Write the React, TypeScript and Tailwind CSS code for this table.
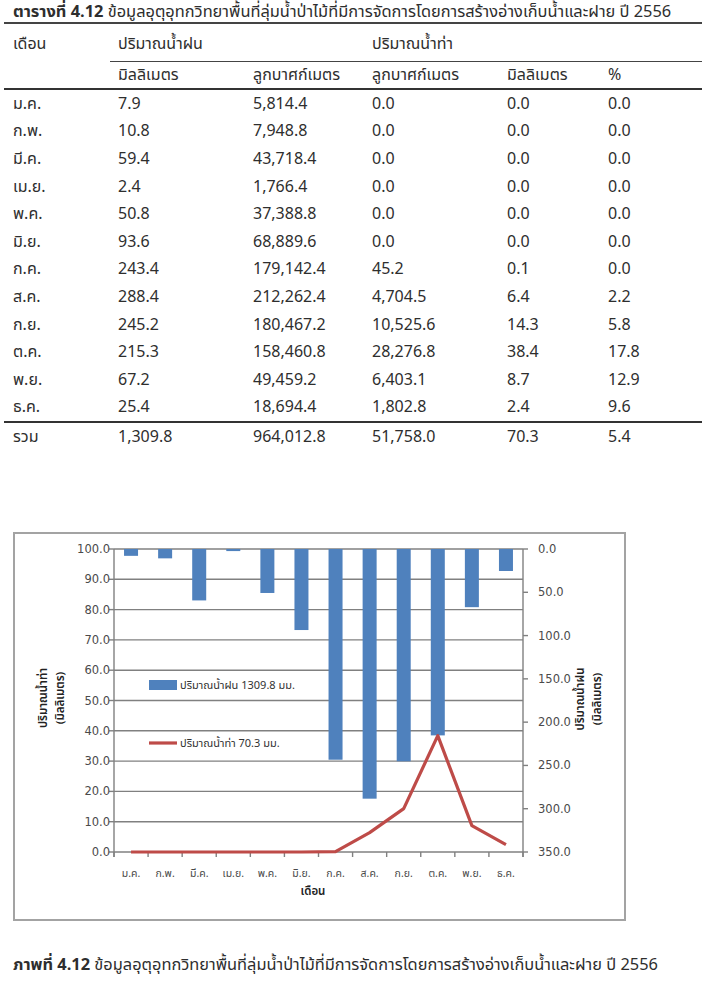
const months = ["ม.ค.", "ก.พ.", "มี.ค.", "เม.ย.", "พ.ค.", "มิ.ย.", "ก.ค.", "ส.ค.", "ก.ย.", "ต.ค.", "พ.ย.", "ธ.ค."];

const rows = [
  ["7.9", "5,814.4", "0.0", "0.0", "0.0"],
  ["10.8", "7,948.8", "0.0", "0.0", "0.0"],
  ["59.4", "43,718.4", "0.0", "0.0", "0.0"],
  ["2.4", "1,766.4", "0.0", "0.0", "0.0"],
  ["50.8", "37,388.8", "0.0", "0.0", "0.0"],
  ["93.6", "68,889.6", "0.0", "0.0", "0.0"],
  ["243.4", "179,142.4", "45.2", "0.1", "0.0"],
  ["288.4", "212,262.4", "4,704.5", "6.4", "2.2"],
  ["245.2", "180,467.2", "10,525.6", "14.3", "5.8"],
  ["215.3", "158,460.8", "28,276.8", "38.4", "17.8"],
  ["67.2", "49,459.2", "6,403.1", "8.7", "12.9"],
  ["25.4", "18,694.4", "1,802.8", "2.4", "9.6"],
];

const rain = [7.9, 10.8, 59.4, 2.4, 50.8, 93.6, 243.4, 288.4, 245.2, 215.3, 67.2, 25.4];
const runoff = [0, 0, 0, 0, 0, 0, 0.1, 6.4, 14.3, 38.4, 8.7, 2.4];

const cols = "grid grid-cols-[106px_135px_119px_135px_101px_1fr]";
const cell = "pl-[8px]";
const num = "'DejaVu Sans', sans-serif";

const Row = ({ label, values }: { label: string; values: string[] }) => (
  <div className={`${cols} h-[27.6px] items-center`}>
    <div className="pl-[9px]">{label}</div>
    {values.map((v, i) => (
      <div key={i} className={cell}>
        {v}
      </div>
    ))}
  </div>
);

// plot area inside the svg
const L = 99;
const R = 508;
const T = 15;
const B = 318;
const H = B - T;
const cw = (R - L) / 12;

const Chart = () => {
  const linePts = runoff
    .map((v, i) => `${L + cw * i + cw / 2},${B - (v / 100) * H}`)
    .join(" ");
  return (
    <svg width="609" height="385" className="block">
      {/* gridlines */}
      {Array.from({ length: 11 }).map((_, i) => {
        const y = B - (i * H) / 10;
        return (
          <g key={i}>
            <line x1={L} x2={R} y1={y} y2={y} stroke="#808080" strokeWidth="1.4" />
            <line x1={L - 5} x2={L} y1={y} y2={y} stroke="#808080" strokeWidth="1.4" />
            <text x={L - 4} y={y + 4} fontSize="11.5" fontFamily={num} textAnchor="end" fill="#4a4a4a">
              {(i * 10).toFixed(1)}
            </text>
          </g>
        );
      })}
      {/* right axis */}
      {Array.from({ length: 8 }).map((_, i) => {
        const y = T + (i * H) / 7;
        return (
          <g key={i}>
            <line x1={R} x2={R + 5} y1={y} y2={y} stroke="#808080" strokeWidth="1.4" />
            <text x={R + 15} y={y + 4} fontSize="11.5" fontFamily={num} fill="#4a4a4a">
              {(i * 50).toFixed(1)}
            </text>
          </g>
        );
      })}
      <line x1={L} x2={L} y1={T} y2={B + 5} stroke="#808080" strokeWidth="1.4" />
      <line x1={R} x2={R} y1={T} y2={B + 5} stroke="#808080" strokeWidth="1.4" />
      {/* x ticks */}
      {Array.from({ length: 13 }).map((_, i) => (
        <line key={i} x1={L + cw * i} x2={L + cw * i} y1={B} y2={B + 5} stroke="#808080" strokeWidth="1.4" />
      ))}
      {/* bars */}
      {rain.map((v, i) => (
        <rect key={i} x={L + cw * i + cw / 2 - 7} y={T} width="14" height={(v / 350) * H} fill="#4f81bd" />
      ))}
      <polyline points={linePts} fill="none" stroke="#be4b48" strokeWidth="3.2" strokeLinejoin="round" />
      {/* month labels */}
      {months.map((m, i) => (
        <text key={m} x={L + cw * i + cw / 2} y={B + 25} fontSize="10.5" textAnchor="middle" fill="#4a4a4a">
          {m}
        </text>
      ))}
      <text x={298} y={B + 43} fontSize="11.5" fontWeight="600" textAnchor="middle" fill="#222">
        เดือน
      </text>
      {/* legend */}
      <rect x="134" y="146" width="28" height="10" fill="#4f81bd" />
      <text x="165" y="155" fontSize="11" fill="#333">
        ปริมาณน้ำฝน 1309.8 มม.
      </text>
      <line x1="134" x2="162" y1="209" y2="209" stroke="#be4b48" strokeWidth="3.2" />
      <text x="165" y="213" fontSize="11" fill="#333">
        ปริมาณน้ำท่า 70.3 มม.
      </text>
      {/* axis titles */}
      <g transform="translate(32,164) rotate(-90)">
        <text x="0" y="0" fontSize="11.5" fontWeight="600" textAnchor="middle" fill="#222">
          ปริมาณน้ำท่า
        </text>
        <text x="0" y="17" fontSize="11.5" fontWeight="600" textAnchor="middle" fill="#222">
          (มิลลิเมตร)
        </text>
      </g>
      <g transform="translate(569,165) rotate(-90)">
        <text x="0" y="0" fontSize="11.5" fontWeight="600" textAnchor="middle" fill="#222">
          ปริมาณน้ำฝน
        </text>
        <text x="0" y="17" fontSize="11.5" fontWeight="600" textAnchor="middle" fill="#222">
          (มิลลิเมตร)
        </text>
      </g>
    </svg>
  );
};

export default function App() {
  return (
    <div className="w-[702px] h-[1000px] bg-white text-[#2e2e2e] font-['Noto_Sans_Thai','Noto_Sans','DejaVu_Sans',sans-serif] overflow-hidden">
      <p className="pl-[13px] pt-[1px] h-[22px] text-[16.4px] leading-[22px] whitespace-nowrap">
        <span className="font-bold">ตารางที่ 4.12</span> ข้อมูลอุตุอุทกวิทยาพื้นที่ลุ่มน้ำป่าไม้ที่มีการจัดการโดยการสร้างอ่างเก็บน้ำและฝาย ปี 2556
      </p>
      <div className="ml-[4px] text-[16px] border-t-2 border-[#444]">
        <div className={`${cols} h-[37px] items-center`}>
          <div className="pl-[9px] pt-[3px]">เดือน</div>
          <div className={`${cell} col-span-2 pt-[3px]`}>ปริมาณน้ำฝน</div>
          <div className={`${cell} col-span-3 pt-[3px]`}>ปริมาณน้ำท่า</div>
        </div>
        <div className={cols}>
          <div />
          <div className="col-span-5 border-t border-[#444]" />
        </div>
        <div className={`${cols} h-[26px] items-center`}>
          <div />
          <div className={cell}>มิลลิเมตร</div>
          <div className={cell}>ลูกบาศก์เมตร</div>
          <div className={cell}>ลูกบาศก์เมตร</div>
          <div className={cell}>มิลลิเมตร</div>
          <div className={cell}>%</div>
        </div>
        <div className="border-t-2 border-[#333]">
          {rows.map((r, i) => (
            <Row key={i} label={months[i]} values={r} />
          ))}
        </div>
        <div className="border-t-2 border-[#333]">
          <Row label="รวม" values={["1,309.8", "964,012.8", "51,758.0", "70.3", "5.4"]} />
        </div>
      </div>
      <div className="ml-[13px] mt-[81px] w-[613px] h-[389px] border-2 border-[#a3a3a3]">
        <Chart />
      </div>
      <p className="pl-[13px] mt-[33px] text-[16.4px] leading-[22px] whitespace-nowrap">
        <span className="font-bold">ภาพที่ 4.12</span> ข้อมูลอุตุอุทกวิทยาพื้นที่ลุ่มน้ำป่าไม้ที่มีการจัดการโดยการสร้างอ่างเก็บน้ำและฝาย ปี 2556
      </p>
    </div>
  );
}
